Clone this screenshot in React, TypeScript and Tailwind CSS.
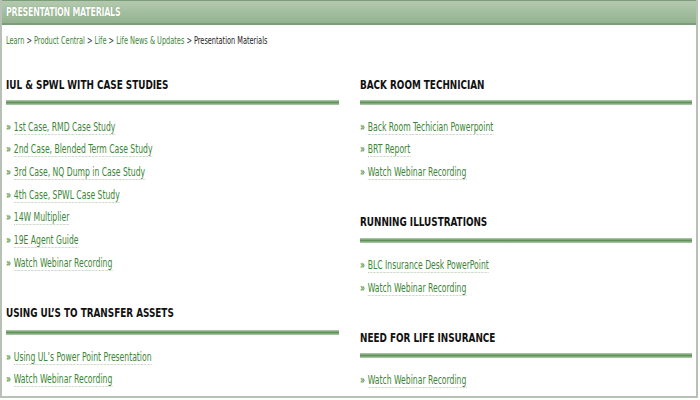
import React from "react";

const FONT = { fontFamily: '"DejaVu Sans Condensed", "DejaVu Sans", sans-serif' };

function Sq({ children, className = "" }: { children: React.ReactNode; className?: string }) {
  return <span className={"inline-block origin-left whitespace-nowrap " + className}>{children}</span>;
}

function Rule() {
  return <div className="h-[5px] bg-gradient-to-b from-[#b7cfb3] via-[#5f9159] to-[#b7cfb3]" />;
}

function LinkRow({ text }: { text: string }) {
  return (
    <li className="h-[22.7px] flex items-center">
      <Sq className="scale-x-[0.71] text-[12px] leading-[15px]">
        <span className="text-[#5a9a50] font-bold mr-[4px]">»</span>
        <span className="text-[#3b8636] border-b border-dotted border-[#b9c9b6]">{text}</span>
      </Sq>
    </li>
  );
}

function Section({ title, links, first, ruleGap = "mt-[5px]" }: { title: string; links: string[]; first?: boolean; ruleGap?: string }) {
  return (
    <section className={first ? "" : "mt-[28.7px]"}>
      <div className="h-[20px] flex items-center">
        <Sq className="scale-x-[0.82] text-[12px] font-bold text-[#111] leading-[20px]">{title}</Sq>
      </div>
      <div className={ruleGap}>
        <Rule />
      </div>
      <ul className="mt-[10.7px]">
        {links.map((l) => (
          <LinkRow key={l} text={l} />
        ))}
      </ul>
    </section>
  );
}

export default function App() {
  return (
    <div className="w-[700px] h-[400px] bg-white overflow-hidden" style={FONT}>
      <div className="w-[698px] h-[398px] border-l-2 border-r-2 border-b-2 border-[#b7c1b5] flex flex-col">
        <header className="h-[25px] border-t border-b-2 border-[#7d9c79] bg-gradient-to-b from-[#b3c9af] to-[#93b38f] flex items-center pl-1">
          <Sq className="scale-x-[0.73] text-[12px] font-bold text-white tracking-tight [text-shadow:0_0_1px_#6d8f69]">PRESENTATION MATERIALS</Sq>
        </header>
        <nav className="pl-1 mt-[9px] h-[14px] flex items-center">
          <Sq className="scale-x-[0.73] text-[10px] leading-[14px]">
            <span className="text-[#3b8636]">Learn</span>
            <span className="text-[#333]"> &gt; </span>
            <span className="text-[#3b8636]">Product Central</span>
            <span className="text-[#333]"> &gt; </span>
            <span className="text-[#3b8636]">Life</span>
            <span className="text-[#333]"> &gt; </span>
            <span className="text-[#3b8636]">Life News &amp; Updates</span>
            <span className="text-[#333]"> &gt; </span>
            <span className="text-[#222]">Presentation Materials</span>
          </Sq>
        </nav>
        <div className="mt-[27px] pl-1 pr-1 grid grid-cols-[333px_332px] gap-x-[21px]">
          <div>
            <Section
              first
              title="IUL & SPWL WITH CASE STUDIES"
              links={[
                "1st Case, RMD Case Study",
                "2nd Case, Blended Term Case Study",
                "3rd Case, NQ Dump in Case Study",
                "4th Case, SPWL Case Study",
                "14W Multiplier",
                "19E Agent Guide",
                "Watch Webinar Recording",
              ]}
            />
            <Section
              title="USING UL’S TO TRANSFER ASSETS"
              ruleGap="mt-[7px]"
              links={["Using UL’s Power Point Presentation", "Watch Webinar Recording"]}
            />
          </div>
          <div>
            <Section
              first
              title="BACK ROOM TECHNICIAN"
              links={["Back Room Techician Powerpoint", "BRT Report", "Watch Webinar Recording"]}
            />
            <Section
              title="RUNNING ILLUSTRATIONS"
              ruleGap="mt-[6px]"
              links={["BLC Insurance Desk PowerPoint", "Watch Webinar Recording"]}
            />
            <Section title="NEED FOR LIFE INSURANCE" links={["Watch Webinar Recording"]} />
          </div>
        </div>
      </div>
    </div>
  );
}
